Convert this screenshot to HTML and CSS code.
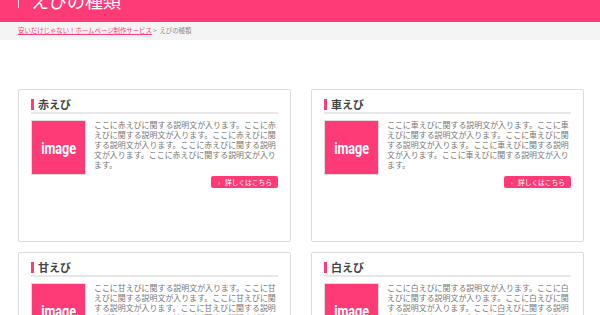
FILE: index.html
```html
<!DOCTYPE html>
<html lang="ja">
<head>
<meta charset="utf-8">
<title>えびの種類</title>
<link rel="stylesheet" href="styles.css">
</head>
<body>

<div class="page_head">
	<span class="head_bar"></span>
	<h1>えびの種類</h1>
</div>

<div class="crumb">
	<a href="#">安いだけじゃない！ホームページ制作サービス</a><span class="sep">&gt;</span>えびの種類
</div>

<div class="kind_list">
	<div class="kind">
		<h2><span>赤えび</span></h2>
		<div class="kind_body">
			<div class="kind_img"><span>image</span></div>
			<p>ここに赤えびに関する説明文が入ります。ここに赤えびに関する説明文が入ります。ここに赤えびに関する説明文が入ります。ここに赤えびに関する説明文が入ります。ここに赤えびに関する説明文が入ります。</p>
		</div>
		<div class="kind_more"><a href="#"><i>&rsaquo;</i>詳しくはこちら</a></div>
	</div>
	<div class="kind">
		<h2><span>車えび</span></h2>
		<div class="kind_body">
			<div class="kind_img"><span>image</span></div>
			<p>ここに車えびに関する説明文が入ります。ここに車えびに関する説明文が入ります。ここに車えびに関する説明文が入ります。ここに車えびに関する説明文が入ります。ここに車えびに関する説明文が入ります。</p>
		</div>
		<div class="kind_more"><a href="#"><i>&rsaquo;</i>詳しくはこちら</a></div>
	</div>
	<div class="kind">
		<h2><span>甘えび</span></h2>
		<div class="kind_body">
			<div class="kind_img"><span>image</span></div>
			<p>ここに甘えびに関する説明文が入ります。ここに甘えびに関する説明文が入ります。ここに甘えびに関する説明文が入ります。ここに甘えびに関する説明文が入ります。ここに甘えびに関する説明文が入ります。</p>
		</div>
		<div class="kind_more"><a href="#"><i>&rsaquo;</i>詳しくはこちら</a></div>
	</div>
	<div class="kind">
		<h2><span>白えび</span></h2>
		<div class="kind_body">
			<div class="kind_img"><span>image</span></div>
			<p>ここに白えびに関する説明文が入ります。ここに白えびに関する説明文が入ります。ここに白えびに関する説明文が入ります。ここに白えびに関する説明文が入ります。ここに白えびに関する説明文が入ります。</p>
		</div>
		<div class="kind_more"><a href="#"><i>&rsaquo;</i>詳しくはこちら</a></div>
	</div>
</div>

</body>
</html>
```

FILE: styles.css
```css
/* Reset style */
* {
	margin:0;
	padding:0;
	box-sizing:border-box;
}
body {
	background:#FFF;
	color:#333;
	font-family:"Noto Sans CJK JP", "Noto Sans", sans-serif;
	overflow:hidden;
}
a {
	text-decoration:none;
}
i {
	font-style:normal;
}

/* head */
.page_head {
	display:flex;
	align-items:flex-start;
	height:22px;
	padding-left:18px;
	background:#FF3B77;
	overflow:hidden;
}
.head_bar {
	width:1px;
	height:8px;
	margin-right:12px;
	background:rgba(255,255,255,0.8);
}
.page_head h1 {
	margin-top:-9px;
	color:#FFF;
	font-size:18px;
	line-height:18px;
	font-weight:normal;
}

/* breadcrumb */
.crumb {
	height:18px;
	padding-left:18px;
	background:#F4F4F4;
	color:#888;
	font-size:6.4px;
	line-height:18px;
}
.crumb a {
	color:#FF3B77;
	text-decoration:underline;
}
.crumb .sep {
	margin:0 3px 0 1px;
}

/* list */
.kind_list {
	display:grid;
	grid-template-columns:1fr 1fr;
	column-gap:20px;
	row-gap:10px;
	padding:49px 16px 0 18px;
}
.kind {
	height:153px;
	padding:9px 12px 0;
	border:1px solid #DCDCDC;
	border-radius:2px;
}
.kind h2 {
	padding-bottom:2px;
	border-bottom:2px solid #E8E8E8;
	font-size:11px;
	line-height:11px;
	font-weight:bold;
	color:#444;
}
.kind h2 span {
	display:block;
	padding-left:4px;
	border-left:3px solid #FF3B77;
}
.kind_body {
	display:flex;
	gap:8px;
	margin-top:6px;
}
.kind_img {
	flex:none;
	display:flex;
	align-items:center;
	justify-content:center;
	width:55px;
	height:55px;
	border:1px solid #E2DADD;
	background:#FF3B77;
	color:#FFF;
	font-family:Roboto, sans-serif;
	font-size:17px;
	font-weight:bold;
}
.kind_img span {
	display:block;
	transform:scaleX(0.74);
}
.kind_body p {
	color:#777;
	font-size:7.95px;
	line-height:9.9px;
}
.kind_more {
	display:flex;
	justify-content:flex-end;
	margin-top:1px;
}
.kind_more a {
	display:block;
	width:67px;
	height:12px;
	padding-left:7px;
	border-radius:2px;
	background:#FF3B77;
	color:#FFF;
	font-size:6.7px;
	line-height:12px;
}
.kind_more i {
	margin-right:5px;
	opacity:0.8;
}
```
